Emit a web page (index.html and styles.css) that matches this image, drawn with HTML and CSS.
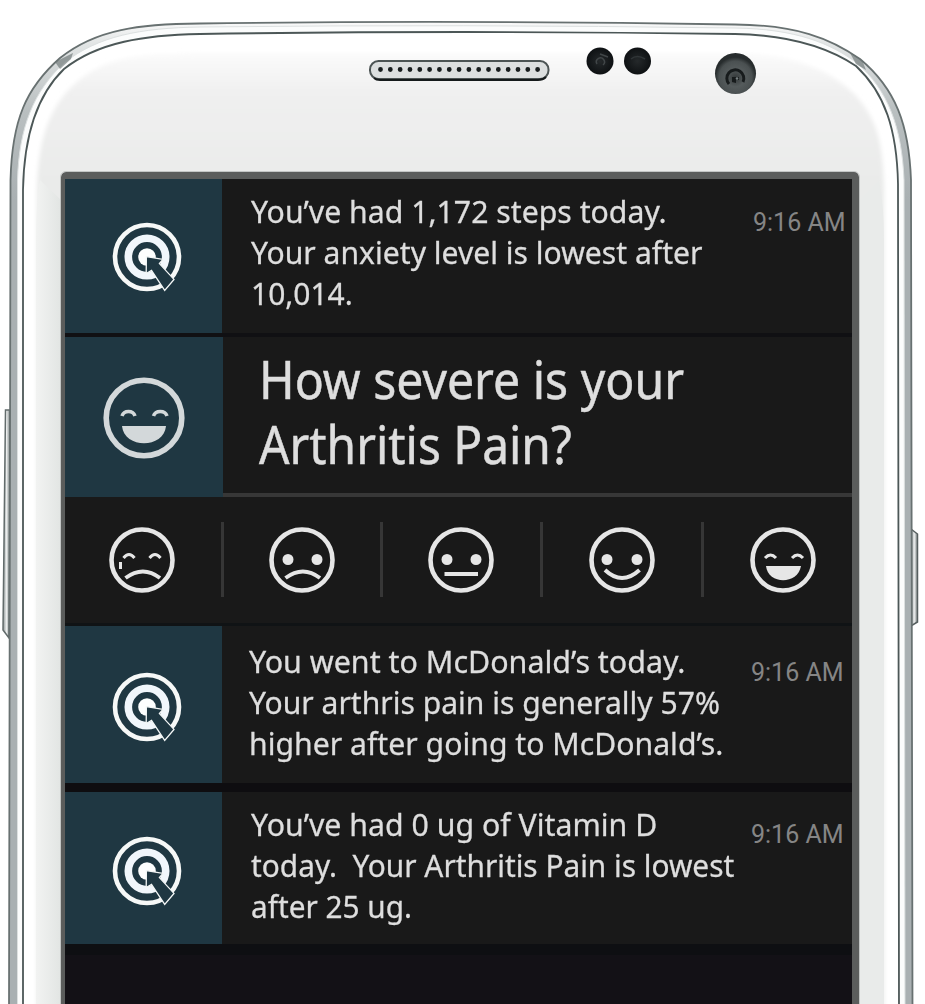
FILE: index.html
```html
<!DOCTYPE html>
<html lang="en">
<head>
<meta charset="utf-8">
<title>Health notifications</title>
<link rel="stylesheet" href="styles.css">
</head>
<body>
<svg width="0" height="0" class="defs" aria-hidden="true">
  <defs>
    <symbol id="target" viewBox="-36 -36 72 72">
      <circle r="32" fill="none" stroke="#f6f8f7" stroke-width="4.6"/>
      <circle r="18.7" fill="none" stroke="#f1f6fb" stroke-width="7.6"/>
      <circle r="8.8" fill="#fdfefe"/>
      <path d="M-.6-.4 16 2.4 12.4 6.6 27 22.4 17.7 33.4 4.5 13.4-.8 16.6Z" fill="#1f3742" stroke="#f4f7f7" stroke-width="1.3"/>
    </symbol>
    <symbol id="grin" viewBox="-42 -42 84 84">
      <g fill="none" stroke="currentColor">
        <circle r="37.8" stroke-width="5.6"/>
        <path d="M-22-2C-20-8-11-8-9-2M9.500-2C11.500-8 21-8 23-2" stroke-width="3.600"/>
      </g>
      <path d="M-22 8H22C20 31-20 31-22 8Z" fill="currentColor"/>
    </symbol>
  </defs>
</svg>
<main class="stage">
  <svg class="phone" viewBox="0 0 925 1004" aria-hidden="true">
    <defs>
      <linearGradient id="face" x1="0" y1="45" x2="0" y2="180" gradientUnits="userSpaceOnUse">
        <stop offset="0" stop-color="#fdfdfd"/><stop offset=".35" stop-color="#f0f0f0"/><stop offset="1" stop-color="#eaebea"/>
      </linearGradient>
      <linearGradient id="rim" x1="0" y1="22" x2="0" y2="200" gradientUnits="userSpaceOnUse">
        <stop offset="0" stop-color="#fafafa"/><stop offset=".12" stop-color="#e2e5e5"/><stop offset=".5" stop-color="#b9bfc0"/><stop offset="1" stop-color="#a9b0b2"/>
      </linearGradient>
      <linearGradient id="side" x1="0" x2="1"><stop offset="0" stop-color="#f2f3f2"/><stop offset="1" stop-color="#e2e5e3"/></linearGradient>
      <linearGradient id="key" x1="0" x2="1"><stop offset="0" stop-color="#8c9393"/><stop offset=".5" stop-color="#eceeee"/><stop offset="1" stop-color="#7d8585"/></linearGradient>
      <filter id="soft"><feGaussianBlur stdDeviation="2"/></filter>
      <radialGradient id="lens" cx=".5" cy=".6"><stop offset="0" stop-color="#333839"/><stop offset=".45" stop-color="#555b5c"/><stop offset=".8" stop-color="#4a5051"/><stop offset="1" stop-color="#272c2d"/></radialGradient>
      <radialGradient id="sensor"><stop offset="0" stop-color="#25292b"/><stop offset="1" stop-color="#0e1113"/></radialGradient>
    </defs>
    <path d="M10 410H5.500L3 630L9 638Z" fill="url(#key)" stroke="#626b6b" stroke-width="1.500"/>
    <path d="M911 529 917.500 534V622L911 626Z" fill="url(#key)" stroke="#555e5e" stroke-width="1.500"/>
    <path d="M9 1010 10.500 180C12 120 26 88 60 58C96 29 140 24 200 23.500Q460 20 735 24.500C796 25 830 38 860 59C896 89 909 125 911 180L912.500 1010Z" fill="url(#rim)" stroke="#687171" stroke-width="1.800"/>
    <path d="M17.500 1010V180C19 127 34 91 64 63C98 36 140 28 200 27Q460 24 735 28C796 29 830 43 857 63C888 90 902 128 904 180L905 1010Z" fill="#fbfcfc" stroke="#dce0e0"/>
    <path d="M55 62 73 53 71 59 60 69Z" fill="#6b7475" opacity=".65"/>
    <path d="M850 53 862 60 866 70 856 64Z" fill="#6b7475" opacity=".65"/>
    <path d="M23 1010V190C24 132 38 94 64 69C98 42 145 35 200 34Q460 30 735 34C791 35 829 48 856 66C885 93 897 130 898 184L899 1010Z" fill="#fff" stroke="#4c5757" stroke-width="1.800"/>
    <path d="M37 1010V190C38 126 57 90 96 69C122 55 150 54 200 53H735C794 54 833 71 858 98C878 122 883 145 884 190V1010Z" fill="url(#face)" filter="url(#soft)"/>
    <path d="M36 1010V240Q36 200 40 180L61 200V1010Z" fill="url(#side)"/>
    <path d="M859 1010V200L879 180Q884 205 884 240V1010Z" fill="#e9ebea"/>
    <rect x="370" y="61" width="178.500" height="18" rx="8.500" fill="#dcdfdf" stroke="#4c5454" stroke-width="2"/>
    <path d="M374 78Q376 80 380 80H538Q543 80 546 77" fill="none" stroke="#151a1b" stroke-width="1.800"/>
    <path d="M380.500 69.500H540" fill="none" stroke="#181d1e" stroke-width="4.800" stroke-linecap="round" stroke-dasharray="0 9.820"/>
    <circle cx="600" cy="61" r="13.500" fill="url(#sensor)"/>
    <path d="M597 64a4 4 0 1 1 6 1M600 54l8 3" fill="none" stroke="#414648" stroke-width="1.500"/>
    <circle cx="637.500" cy="61" r="13.500" fill="url(#sensor)"/>
    <path d="M631 59Q637 54 645 59" fill="none" stroke="#303537" stroke-width="1.500"/>
    <circle cx="735.500" cy="73.500" r="20.500" fill="url(#lens)"/>
    <path d="M729 84A8.500 8.500 0 1 1 743 82" fill="none" stroke="#171b1c" stroke-width="3"/>
    <path d="M732 82V77H739V80H736V83Z" fill="#171b1c"/><circle cx="737" cy="78.500" r="1.300" fill="#788081"/>
  </svg>

  <section class="screen">
    <article class="card card--steps">
      <div class="card__icon"><svg class="icon-target"><use href="#target"/></svg></div>
      <p class="message"><span class="a1">You’ve had 1,172 steps today.</span><span class="a2">Your anxiety level is lowest after</span><span class="a3">10,014.</span></p>
      <time class="time">9:16 AM</time>
    </article>
    <article class="card card--question">
      <div class="card__icon"><svg class="icon-grin"><use href="#grin"/></svg></div>
      <h1 class="question"><span class="q1">How severe is your</span><span class="q2">Arthritis Pain?</span></h1>
    </article>
    <nav class="faces" aria-label="Pain level">
      <div class="face"><svg viewBox="-34 -34 68 68"><circle r="30.500"/><path d="M-18.500-2Q-13-9-7.500-2M7.500-2Q13-9 18.500-2" class="thin"/><path d="M-16.500 18Q1 5 18 18"/><path class="thin" d="M-21.500 2V9"/></svg></div>
      <div class="face"><svg viewBox="-34 -34 68 68"><circle r="30.500"/><path d="M-16.500 18Q1 5 18 18"/><path class="eyes" d="M-14-.5h0M15-.5h0"/></svg></div>
      <div class="face"><svg viewBox="-34 -34 68 68"><circle r="30.500"/><path d="M-16.500 14H17"/><path class="eyes" d="M-14-.5h0M15-.5h0"/></svg></div>
      <div class="face"><svg viewBox="-34 -34 68 68"><circle r="30.500"/><path d="M-17 10Q0 26 17.500 10"/><path class="eyes" d="M-15-.5h0M15-.5h0"/></svg></div>
      <div class="face"><svg viewBox="-34 -34 68 68"><circle r="30.500"/><path d="M-18-2Q-12.500-8-7-2M9-2Q14.500-8 20-2" class="thin"/><path class="mouth" d="M-17 6H18C15 25-15 25-17 6Z"/></svg></div>
    </nav>
    <article class="card card--place">
      <div class="card__icon"><svg class="icon-target"><use href="#target"/></svg></div>
      <p class="message"><span class="b1">You went to McDonald’s today.</span><span class="b2">Your arthris pain is generally 57%</span><span class="b3">higher after going to McDonald’s.</span></p>
      <time class="time">9:16 AM</time>
    </article>
    <article class="card card--vitamin">
      <div class="card__icon"><svg class="icon-target"><use href="#target"/></svg></div>
      <p class="message"><span class="c1">You’ve had 0 ug of Vitamin D</span><span class="c2">today.&nbsp; Your Arthritis Pain is lowest</span><span class="c3">after 25 ug.</span></p>
      <time class="time">9:16 AM</time>
    </article>
    <div class="shade"></div>
  </section>
</main>
</body>
</html>
```
FILE: styles.css
```css
* { box-sizing: border-box; }
body { margin: 0; background: #fff; font-family: "Noto Sans", sans-serif; }
.defs { position: absolute; }
.stage { position: relative; width: 925px; height: 1004px; overflow: hidden; padding: 172px 0 0 61px; }
.phone { position: absolute; left: 0; top: 0; width: 925px; height: 1004px; }
.screen {
  position: relative; width: 798px; height: 840px;
  border: solid #5b5d5c; border-width: 7px 7px 0 4px;
  border-radius: 5px 5px 0 0;
  outline: 1px solid #c3c6c5;
  background: #131116;
}
.card { display: flex; width: 787px; background: #191919; }
.card__icon { width: 157px; flex: none; background: #1f3742; }
.card__icon svg { display: block; }
.icon-target { width: 72px; height: 72px; margin: 42px 0 0 45.500px; }
.icon-grin { width: 84px; height: 84px; margin: 39px 0 0 37px; color: #d3d8da; }
.card--steps { height: 158px; border-bottom: 4px solid #101013; }
.card--question { height: 160px; }
.card--question .card__icon { width: 158px; }
.card--place { height: 166px; border-bottom: 9px solid #0e0d10; }
.card--place .icon-target { margin-top: 44.500px; }
.card--place .card__icon, .card--vitamin .card__icon { width: 157px; }
.card--vitamin { height: 152px; }
.card--vitamin .icon-target { margin-top: 43px; }
.message { margin: 12px 0 0 29px; width: 490px; flex: none; font-size: 31px; line-height: 41px; color: #dedede; -webkit-text-stroke: .3px #dedede; }
.card--place .message { margin: 15px 2px 0 27px; }
.card--vitamin .message { margin-top: 12px; }
.message span, .question span { display: block; width: max-content; transform-origin: left; white-space: nowrap; }
.a1 { transform: scaleX(.975); }
.a2 { transform: scaleX(.971); }
.a3 { transform: scaleX(.967); }
.b1 { transform: scaleX(.981); }
.b2 { transform: scaleX(.970); }
.b3 { transform: scaleX(.974); }
.c1 { transform: scaleX(.977); }
.c2 { transform: scaleX(.962); }
.c3 { transform: scaleX(.960); }
.q1 { transform: scaleX(.926); }
.q2 { transform: scaleX(.920); }
.time { font: 25px/30px Roboto, sans-serif; color: #858585; white-space: nowrap; margin: 29px 0 0 12px; }
.card--place .time { margin: 32px 0 0 10px; }
.card--vitamin .time { margin: 28px 0 0 10px; }
.question { flex: 1; height: 160px; margin: 0; padding: 9px 0 0 36px; border-bottom: 4px solid #373737; font-size: 52px; font-weight: 400; line-height: 65px; color: #dedede; -webkit-text-stroke: .5px #dedede; }
.card--question { position: relative; }
.card--question .question { height: 160px; }
.faces { display: grid; grid-template-columns: 158.500px 159px 160.500px 161px 148px; height: 129px; padding-top: 25px; background: #191919; border-bottom: 3px solid #101315; }
.face { height: 75px; border-right: 3px solid #363636; display: flex; justify-content: center; }
.face:first-child { padding-right: 2px; }
.face:last-child { border: 0; padding-left: 9px; }
.face svg { width: 68px; height: 68px; margin-top: 3.500px; fill: none; stroke: #e6e6e6; stroke-width: 4; flex: none; }
.face circle { stroke-width: 4.600; }
.face .thin { stroke-width: 3; }
.face .eyes { stroke-width: 11; stroke-linecap: round; }
.face .mouth { fill: #e6e6e6; stroke: none; }
.shade { height: 11px; background: #0e0f12; }
```
